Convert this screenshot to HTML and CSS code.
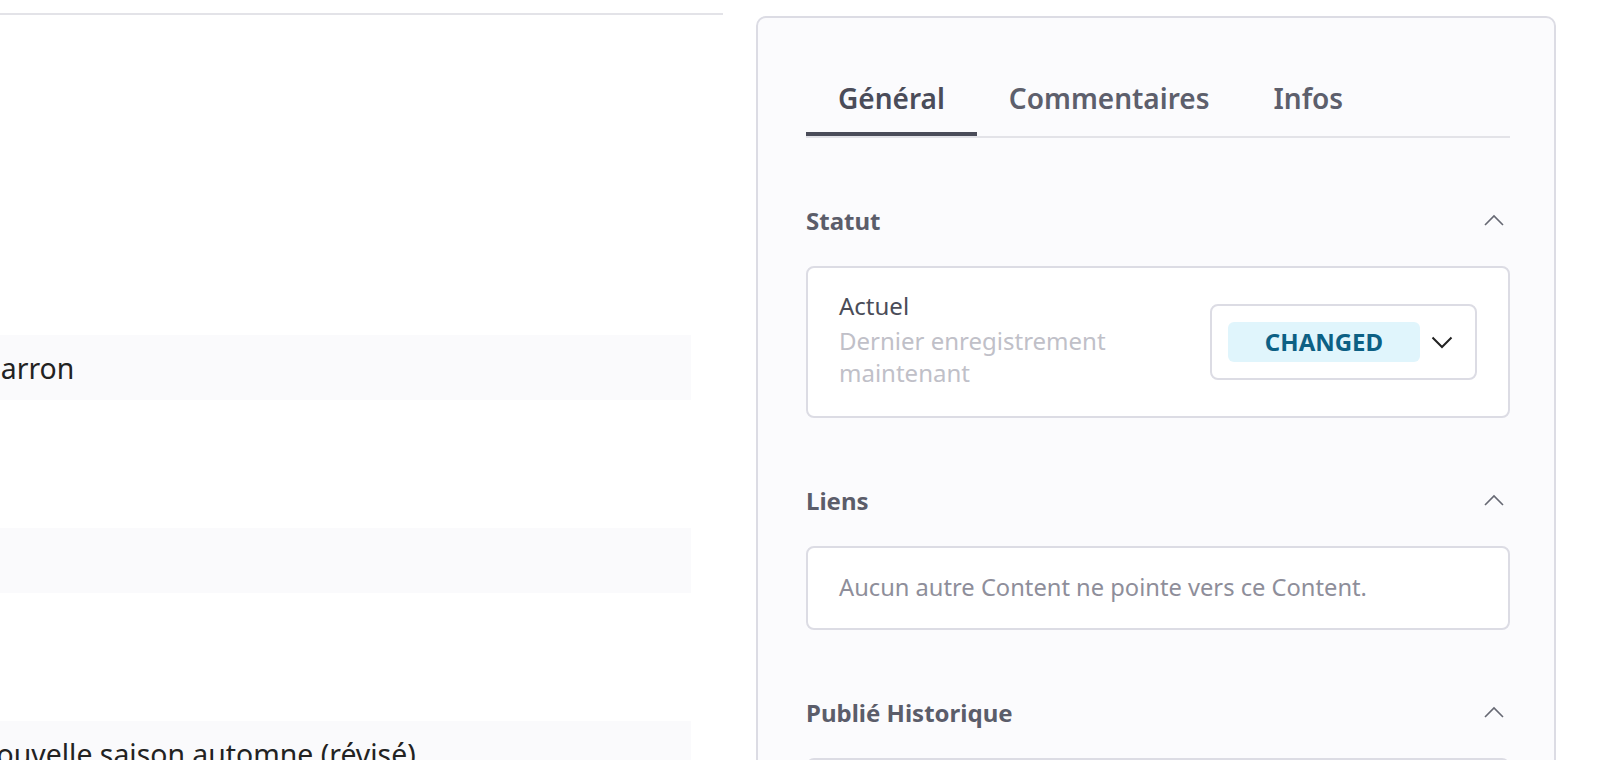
FILE: index.html
```html
<!DOCTYPE html>
<html lang="fr">
<head>
  <meta charset="UTF-8">
  <meta name="viewport" content="width=device-width, initial-scale=1">
  <title>Content - Édition</title>
  <link rel="stylesheet" href="styles.css">
</head>
<body>
  <div class="page">
    <main class="main">
      <div class="main-top"></div>

      <div class="fields">
        <div class="field">Marron</div>
        <div class="field"></div>
        <div class="field">Nouvelle saison automne (révisé)</div>
      </div>
    </main>

    <aside class="panel">
      <div class="tabs">
        <div class="tab active">Général</div>
        <div class="tab">Commentaires</div>
        <div class="tab">Infos</div>
      </div>

      <section class="section first">
        <div class="section-head">
          <h3>Statut</h3>
          <svg class="chev-up" width="24" height="24" viewBox="0 0 24 24"><polyline points="3,16 12,7 21,16" /></svg>
        </div>
        <div class="box status-box">
          <div class="status-text">
            <div class="status-title">Actuel</div>
            <div class="status-sub">Dernier enregistrement maintenant</div>
          </div>
          <div class="select">
            <span class="badge">CHANGED</span>
            <svg class="chev-down" width="24" height="24" viewBox="0 0 24 24"><polyline points="2.5,7.5 12,17 21.5,7.5" /></svg>
          </div>
        </div>
      </section>

      <section class="section">
        <div class="section-head">
          <h3>Liens</h3>
          <svg class="chev-up" width="24" height="24" viewBox="0 0 24 24"><polyline points="3,16 12,7 21,16" /></svg>
        </div>
        <div class="box links-box">Aucun autre Content ne pointe vers ce Content.</div>
      </section>

      <section class="section">
        <div class="section-head">
          <h3>Publié Historique</h3>
          <svg class="chev-up" width="24" height="24" viewBox="0 0 24 24"><polyline points="3,16 12,7 21,16" /></svg>
        </div>
        <div class="box links-box">Aucune version publiée.</div>
      </section>
    </aside>
  </div>
</body>
</html>
```

FILE: styles.css
```css
:root {
  --border: #dcdce4;
  --soft-bg: #fafafc;
  --text-dark: #4a4c58;
  --text-head: #5b5d6a;
  --text-muted: #8e8e9a;
  --text-faint: #c0c0c8;
}

html, body {
  margin: 0;
  height: 100%;
  overflow: hidden;
}

body {
  font-family: "Noto Sans", "Open Sans", sans-serif;
  background: #fff;
  color: var(--text-dark);
}

.page {
  display: flex;
  align-items: flex-start;
}

/* left column, scrolled a bit to the right */
.main {
  flex: none;
  width: 772px;
  margin-left: -49px;
}

.main-top {
  height: 13px;
  border-bottom: 2px solid #e3e3e8;
}

.fields {
  padding: 320px 32px 0 0;
}

.field {
  height: 65px;
  display: flex;
  align-items: center;
  padding: 0 24px;
  margin-bottom: 128px;
  background: var(--soft-bg);
  font-size: 28.4px;
  color: #222;
  white-space: nowrap;
}

/* right panel */
.panel {
  flex: none;
  width: 800px;
  box-sizing: border-box;
  margin: 16px 0 0 33px;
  padding: 62px 44px 0 48px;
  min-height: 800px;
  background: #fbfbfd;
  border: 2px solid var(--border);
  border-radius: 10px;
}

.tabs {
  display: flex;
  border-bottom: 2px solid #e3e3e8;
}

.tab {
  padding: 0 32px 16px;
  line-height: 36px;
  font-size: 28px;
  font-weight: 600;
  color: #5d5f6c;
  border-bottom: 4px solid transparent;
}

.tab.active {
  color: #4a4c59;
  border-bottom-color: #4a4c59;
}

.section {
  margin-top: 67px;
}

.section-head {
  display: flex;
  justify-content: space-between;
  align-items: center;
  margin-bottom: 29px;
}

.section-head h3 {
  margin: 0;
  font-size: 24px;
  line-height: 32px;
  font-weight: 700;
  color: var(--text-head);
}

.chev-up {
  margin-right: 4px;
}

.chev-up polyline {
  fill: none;
  stroke: #666873;
  stroke-width: 1.6;
}

.box {
  background: #fff;
  border: 2px solid var(--border);
  border-radius: 8px;
}

.status-box {
  display: flex;
  align-items: center;
  gap: 32px;
  padding: 25px 31px;
}

.status-text {
  flex: 1;
  font-size: 24px;
  margin: -3px 0 3px;
}

.status-title {
  line-height: 32px;
  color: var(--text-dark);
}

.status-sub {
  margin-top: 3px;
  line-height: 31.5px;
  color: var(--text-faint);
}

.select {
  flex: none;
  width: 267px;
  box-sizing: border-box;
  display: flex;
  align-items: center;
  gap: 10px;
  padding: 16px 21px 16px 16px;
  border: 2px solid var(--border);
  border-radius: 8px;
  background: #fff;
}

.badge {
  flex: 1;
  height: 40px;
  line-height: 40px;
  text-align: center;
  border-radius: 6px;
  background: #e0f5fc;
  color: #0c6084;
  font-size: 24px;
  font-weight: 700;
}

.chev-down polyline {
  fill: none;
  stroke: #222;
  stroke-width: 2;
}

.links-box {
  padding: 23px 31px 25px;
  font-size: 23.7px;
  line-height: 32px;
  color: var(--text-muted);
}
```
